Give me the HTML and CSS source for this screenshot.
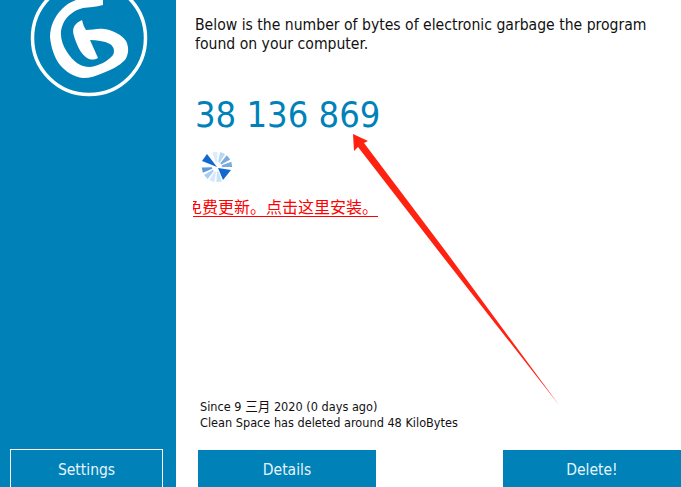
FILE: index.html
```html
<!DOCTYPE html>
<html lang="en">

<head>
    <meta charset="UTF-8">
    <meta name="viewport" content="width=device-width, initial-scale=1.0">
    <title>Clean Space</title>
    <link rel="stylesheet" href="styles.css">
</head>

<body>
    <div class="app">
        <div class="sidebar">
            <svg class="logo" width="176" height="100" viewBox="0 0 176 100">
                <circle cx="89" cy="38" r="56.5" fill="none" stroke="#fff" stroke-width="3.5" />
                <path fill="#fff" d="M103 -2 L103 5 C96 7 89 7 83 8 C75 10 67 15 63 24 C59 33 61 43 67 52 C73 61 80 67 90 67 C99 66 108 61 113 55 C115 51 114 47 110 44 C104 41 97 40 90 40 L98 58 C94 60 91 60 87 58 C81 54 77 46 74 36 C72 30 73 24 82 20 C83 24 84 27 86 30 C92 30 98 28 104 29 C113 30 122 35 126 41 C129 47 129 54 125 60 C119 66 111 70 103 73 C96 76 90 78 83 78 C74 77 66 72 60 65 C54 57 51 47 50 37 C50 27 54 17 62 9 C68 3 74 0 83 -2 Z" />
            </svg>
            <div class="sidebar-foot">
                <button class="btn btn-outline">Settings</button>
            </div>
        </div>

        <div class="main">
            <p class="intro">Below is the number of bytes of electronic garbage the program found on your computer.</p>
            <div class="count">38 136 869</div>

            <svg class="spinner" width="32" height="32" viewBox="-16 -16 32 32">
                <defs>
                    <path id="blade" d="M-2.7 -15 L2.7 -15 L0.8 -5 L-0.8 -5 Z" />
                </defs>
                <use href="#blade" transform="rotate(-8)" fill="#dcecfc" />
                <use href="#blade" transform="rotate(22)" fill="#b9d6f2" />
                <use href="#blade" transform="rotate(50)" fill="#79abdc" />
                <use href="#blade" transform="rotate(80)" fill="#79abdc" />
                <use href="#blade" transform="rotate(172)" fill="#c9e2fb" />
                <use href="#blade" transform="rotate(200)" fill="#d6e9fb" />
                <use href="#blade" transform="rotate(228)" fill="#a9cdf0" />
                <use href="#blade" transform="rotate(258)" fill="#5b9ad8" />
                <path fill="#1268cf" d="M-10 -13 L-15 -6 L0 0 Z M14 3 L6 13 L1 1 Z" />
            </svg>

            <div class="update"><a href="#">免费更新。点击这里安装。</a></div>

            <div class="stats">
                <div>Since 9 三月 2020 (0 days ago)</div>
                <div>Clean Space has deleted around 48 KiloBytes</div>
            </div>

            <div class="actions">
                <button class="btn btn-solid btn-details">Details</button>
                <button class="btn btn-solid">Delete!</button>
            </div>
        </div>
    </div>

    <!-- red annotation arrow drawn over the window -->
    <svg class="arrow" width="681" height="487" viewBox="0 0 681 487">
        <path fill="#ff2211" d="M353 134 L368 141 L364 143 L447 253 L559 405 L440 253 L358 147 L354 151 Z" />
    </svg>
</body>

</html>
```

FILE: styles.css
```css
body {
    font-family: "DejaVu Sans", "Noto Sans CJK SC", sans-serif;
    font-stretch: condensed;
    margin: 0;
    background-color: white;
    color: #111;
    overflow: hidden;
}

.app {
    display: flex;
    width: 681px;
    height: 487px;
}

.sidebar {
    width: 176px;
    background-color: #0082b8;
    display: flex;
    flex-direction: column;
    justify-content: space-between;
}

.logo {
    display: block;
}

.sidebar-foot {
    padding-left: 10px;
}

.main {
    flex: 1;
    min-width: 0;
    display: flex;
    flex-direction: column;
    padding-left: 19px;
}

.intro {
    margin: 16px 0 0;
    width: 470px;
    font-size: 15.6px;
    line-height: 19px;
}

.count {
    margin-top: 39px;
    font-size: 36px;
    line-height: 44px;
    color: #0082b8;
}

.spinner {
    display: block;
    margin: 14px 0 0 6px;
}

.update {
    margin: 12px 0 0 -2px;
    width: 185px;
    height: 22px;
    display: flex;
    justify-content: flex-end;
    overflow: hidden;
    border-bottom: 1px solid #f00;
    box-sizing: border-box;
}

.update a {
    flex: none;
    color: #f00;
    font-size: 16px;
    line-height: 23px;
    text-decoration: none;
    font-family: "Noto Sans CJK SC", sans-serif;
}

.stats {
    margin: auto 0 19px 5px;
    font-size: 12.6px;
    line-height: 16px;
}

.actions {
    display: flex;
    justify-content: space-between;
    padding-left: 3px;
}

.btn {
    font-family: inherit;
    font-stretch: inherit;
    font-size: 15.5px;
    color: #e6f4fa;
    height: 37px;
    padding: 2px 0 0;
    border: none;
    background-color: #0082b8;
    cursor: pointer;
}

.btn-outline {
    width: 153px;
    height: 38px;
    border: 1px solid #fff;
    border-bottom: none;
}

.btn-solid {
    width: 178px;
}

.arrow {
    position: absolute;
    left: 0;
    top: 0;
    pointer-events: none;
}
```
